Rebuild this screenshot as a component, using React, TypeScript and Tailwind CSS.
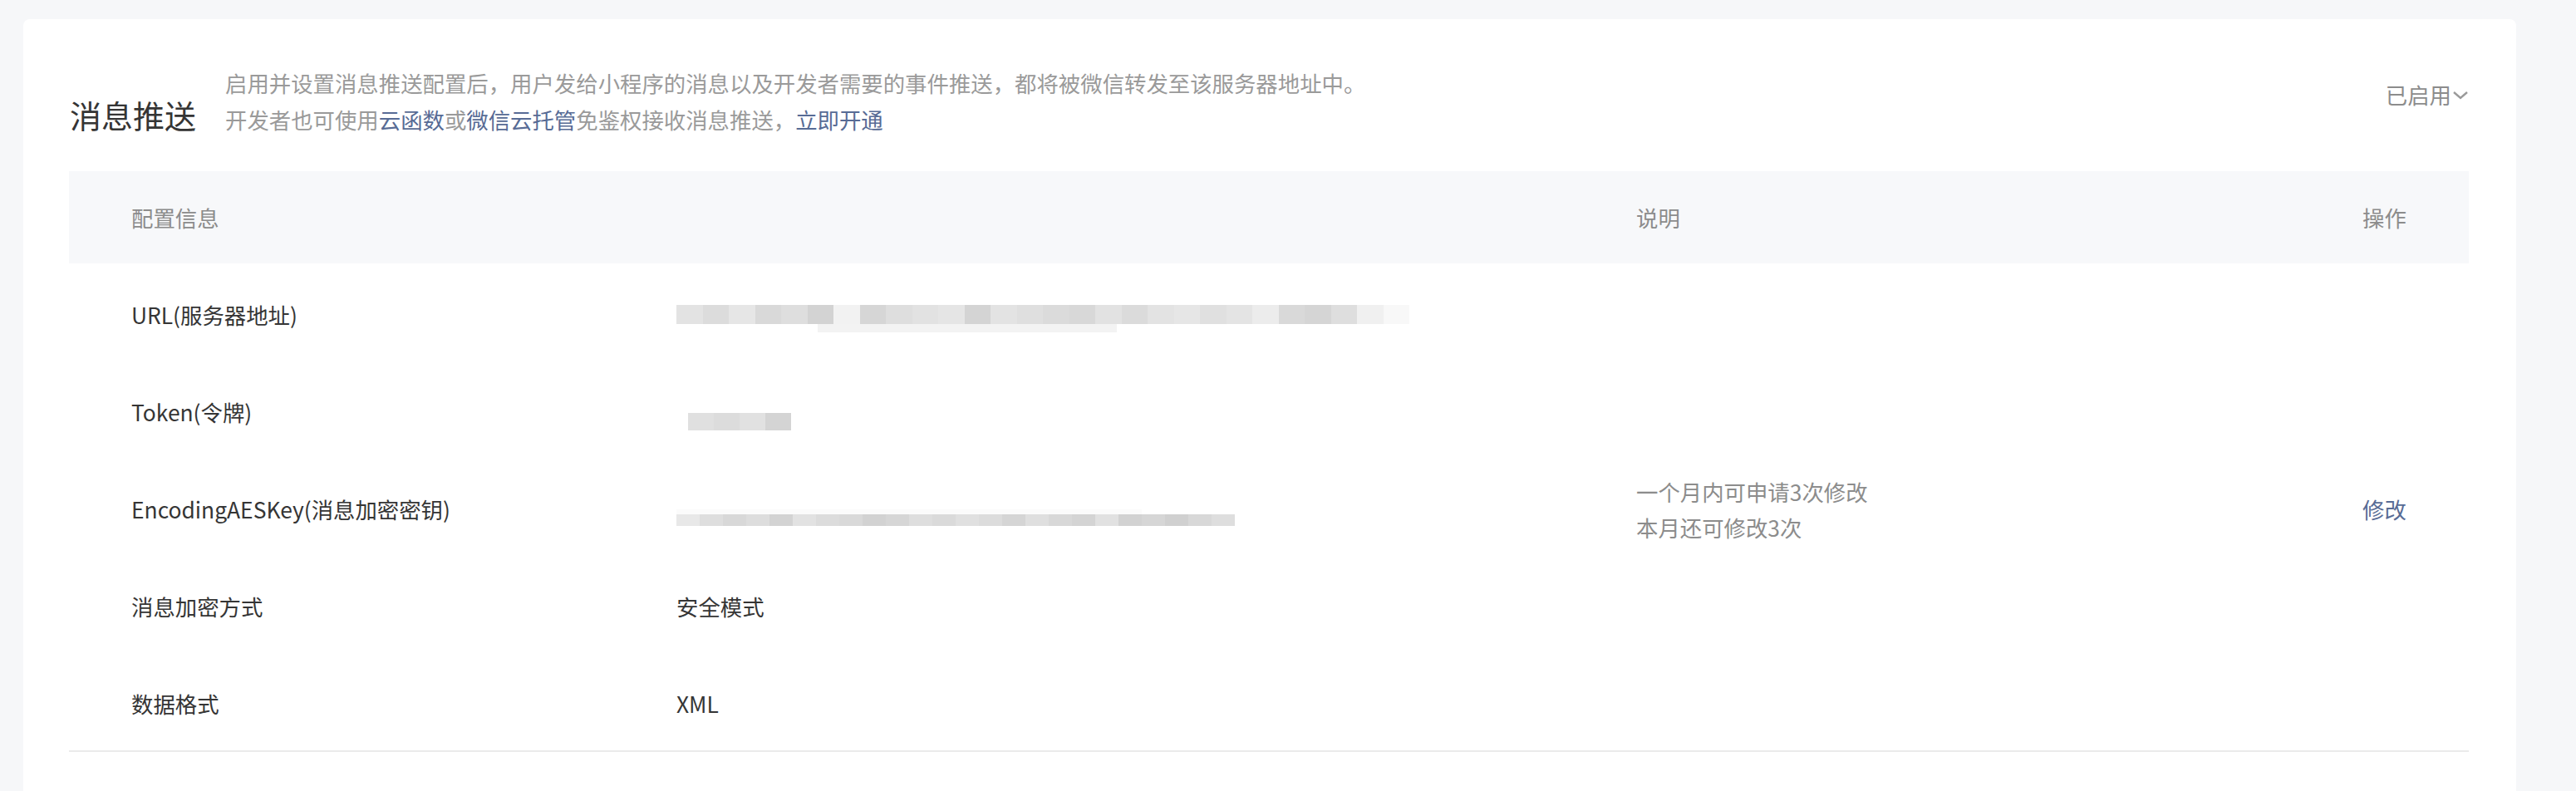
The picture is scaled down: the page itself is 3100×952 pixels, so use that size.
import React from "react";

const urlCells = [
  "bg-[#e3e3e3]", "bg-[#dcdcdc]", "bg-[#e6e6e6]", "bg-[#d9d9d9]", "bg-[#dedede]", "bg-[#d3d3d3]",
  "bg-[#f2f2f2]", "bg-[#d6d6d6]", "bg-[#dedede]", "bg-[#e2e2e2]", "bg-[#e5e5e5]", "bg-[#d4d4d4]",
  "bg-[#e3e3e3]", "bg-[#dfdfdf]", "bg-[#dbdbdb]", "bg-[#d8d8d8]", "bg-[#e2e2e2]", "bg-[#dbdbdb]",
  "bg-[#e3e3e3]", "bg-[#e6e6e6]", "bg-[#e0e0e0]", "bg-[#e4e4e4]", "bg-[#ececec]", "bg-[#d9d9d9]",
  "bg-[#d5d5d5]", "bg-[#dedede]", "bg-[#f0f0f0]", "bg-[#f8f8f8]",
];

const tokenCells = ["bg-[#e0e0e0]", "bg-[#dcdcdc]", "bg-[#e1e1e1]", "bg-[#d4d4d4]"];

const keyCells = [
  "bg-[#e8e8e8]", "bg-[#dedede]", "bg-[#d8d8d8]", "bg-[#dddddd]", "bg-[#d3d3d3]", "bg-[#e2e2e2]",
  "bg-[#dcdcdc]", "bg-[#d9d9d9]", "bg-[#d2d2d2]", "bg-[#d6d6d6]", "bg-[#dedede]", "bg-[#dadada]",
  "bg-[#e0e0e0]", "bg-[#dcdcdc]", "bg-[#d5d5d5]", "bg-[#dfdfdf]", "bg-[#d8d8d8]", "bg-[#d4d4d4]",
  "bg-[#e1e1e1]", "bg-[#d2d2d2]", "bg-[#d6d6d6]", "bg-[#d0d0d0]", "bg-[#d8d8d8]", "bg-[#dedede]",
];

function Mosaic({ cells, cell, h }: { cells: string[]; cell: string; h: string }) {
  return (
    <div className={`flex blur-[0.6px] ${h}`}>
      {cells.map((c, i) => (
        <div key={i} className={`${cell} h-full ${c}`} />
      ))}
    </div>
  );
}

const rows = [
  {
    label: "URL(服务器地址)",
    value: (
      <div className="flex flex-col pt-[8px]">
        <Mosaic cells={urlCells} cell="w-[31.5px]" h="h-[23px]" />
        <div className="ml-[170px] h-[10px] w-[360px] bg-[#f3f3f3]" />
      </div>
    ),
  },
  {
    label: "Token(令牌)",
    value: (
      <div className="pt-[22px] pl-[14px]">
        <Mosaic cells={tokenCells} cell="w-[31px]" h="h-[21px]" />
      </div>
    ),
  },
  {
    label: "EncodingAESKey(消息加密密钥)",
    value: (
      <div className="flex flex-col pt-[20px]">
        <div className="h-[6px] w-[560px] bg-[#fbfbfb]" />
        <Mosaic cells={keyCells} cell="w-[28px]" h="h-[14px]" />
      </div>
    ),
    desc: ["一个月内可申请3次修改", "本月还可修改3次"],
    op: "修改",
  },
  { label: "消息加密方式", value: <span>安全模式</span> },
  { label: "数据格式", value: <span>XML</span> },
];

export default function App() {
  return (
    <div className="min-h-[952px] w-[3100px] bg-[#f6f7f9] pt-[23px] font-['Noto_Sans_CJK_SC',sans-serif] text-[26.4px] text-[#353535]">
      <div className="ml-[28px] min-h-[929px] w-[3000px] rounded-t-lg bg-white pl-[55px] pr-[57px]">
        {/* head */}
        <div className="flex justify-between pt-[55px]">
          <div className="flex items-end">
            <h1 className="mb-[6px] ml-[1px] text-[38px] font-normal leading-[44px] text-[#353535]">消息推送</h1>
            <div className="ml-[35px] leading-[44px] text-[#9a9a9a]">
              <p>启用并设置消息推送配置后，用户发给小程序的消息以及开发者需要的事件推送，都将被微信转发至该服务器地址中。</p>
              <p>
                开发者也可使用<span className="text-[#576b95]">云函数</span>或
                <span className="text-[#576b95]">微信云托管</span>免鉴权接收消息推送，
                <span className="text-[#576b95]">立即开通</span>
              </p>
            </div>
          </div>
          <div className="mt-[14px] flex h-[44px] items-center text-[#8c8c8c]">
            已启用
            <svg width="20" height="12" viewBox="0 0 20 12" className="ml-[1px] mt-[2px]">
              <polyline points="2,2 10,9 18,2" fill="none" stroke="#9a9a9a" strokeWidth="2.4" />
            </svg>
          </div>
        </div>

        {/* table */}
        <div className="mt-[40px]">
          <div className="grid h-[111px] grid-cols-[656px_1155px_874px_1fr] items-center bg-[#f7f8fa] text-[#8c8c8c]">
            <div className="pl-[75px]">配置信息</div>
            <div />
            <div className="pl-[75px]">说明</div>
            <div className="pl-[75px]">操作</div>
          </div>
          <div className="border-b-2 border-[#ebebeb] pt-[1px]">
            {rows.map((r) => (
              <div key={r.label} className="grid h-[117px] grid-cols-[656px_1155px_874px_1fr] items-center pt-[5px]">
                <div className="pl-[75px]">{r.label}</div>
                <div className="pl-[75px]">{r.value}</div>
                <div className="pl-[75px] leading-[43px] text-[#8c8c8c]">
                  {r.desc?.map((d) => (
                    <p key={d}>{d}</p>
                  ))}
                </div>
                <div className="pl-[75px] text-[#576b95]">{r.op}</div>
              </div>
            ))}
          </div>
        </div>
      </div>
    </div>
  );
}
